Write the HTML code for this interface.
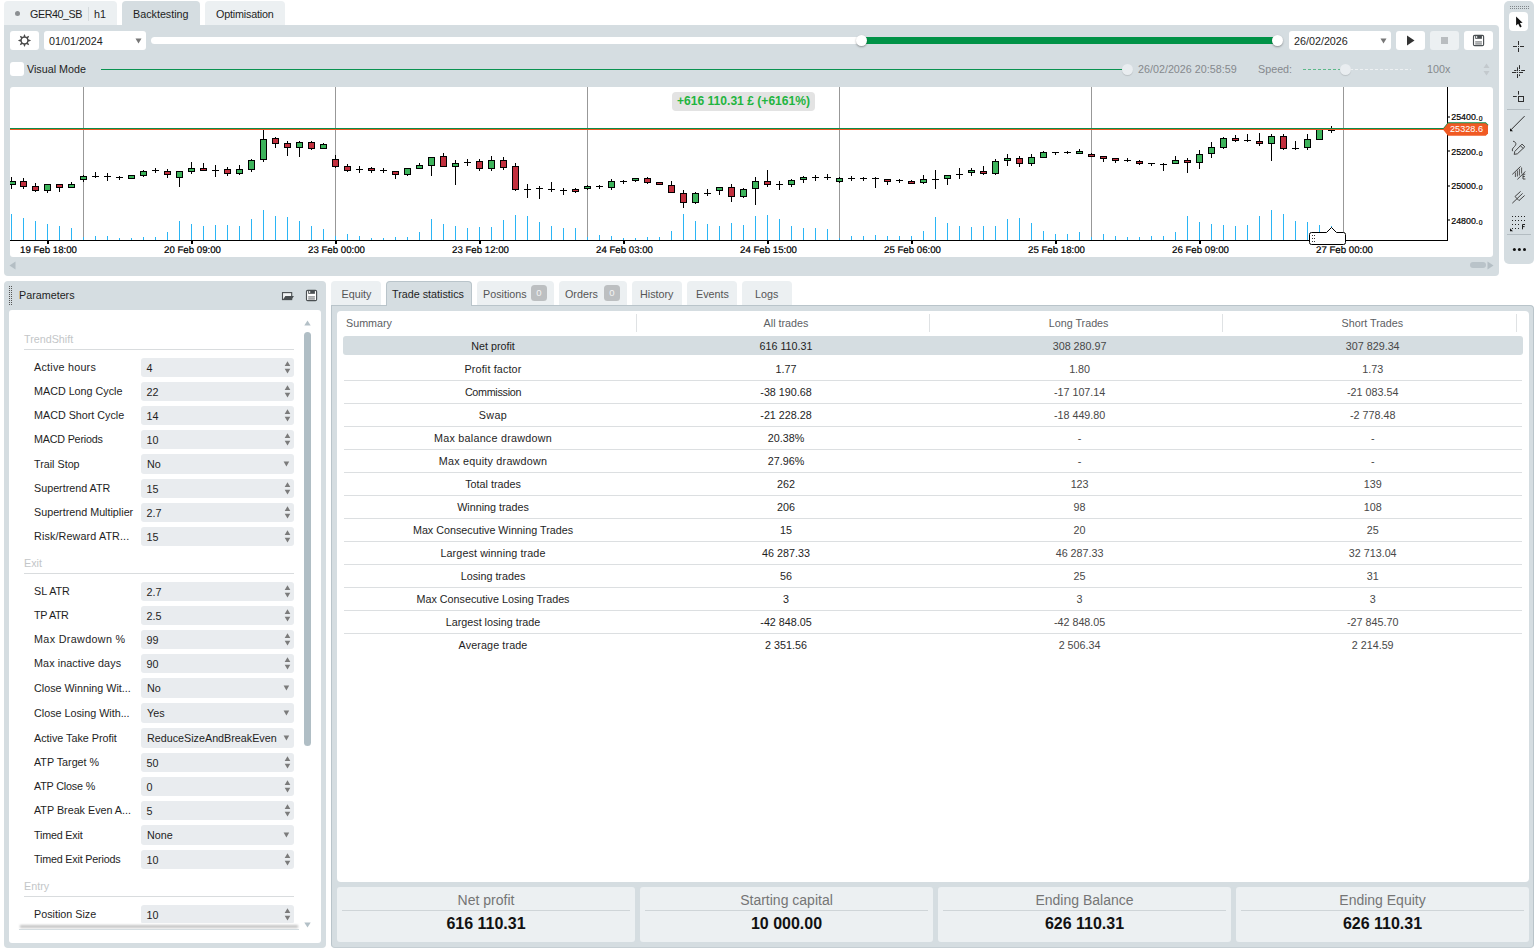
<!DOCTYPE html><html><head><meta charset="utf-8"><title>Backtesting</title><style>
*{box-sizing:border-box;margin:0;padding:0}
html,body{width:1536px;height:949px;overflow:hidden;background:#fff}
body{position:relative;font-family:"Liberation Sans",Arial,sans-serif;font-size:10.75px;color:#1e1e1e}
.a{position:absolute}
.t{position:absolute;white-space:nowrap;line-height:16px;height:16px}
.c{text-align:center}
.g{color:#85898d}
.pan{background:#d5dde1}
.lt{background:#ecf0f2}
.w{background:#fff}
.fld{position:absolute;left:141px;width:153px;height:19px;background:#e9ecef;border-radius:3px}
.sec{position:absolute;left:24px;color:#c3c6c8}
.ln{position:absolute;left:24px;width:270px;height:1px;background:#d9dcde}
.rl{position:absolute;left:344px;width:1178px;height:1px;background:#dcdfe1}
</style></head><body>
<div class="a lt" style="left:4px;top:1px;width:113px;height:24px;border-radius:4px 4px 0 0"></div>
<div class="a " style="left:15px;top:11px;width:5px;height:5px;background:#8b8f92;border-radius:50%"></div>
<span class="t " style="left:30px;top:6px;letter-spacing:-0.45px;">GER40_SB</span>
<div class="a " style="left:88px;top:7px;width:1px;height:14px;background:#d5dadd"></div>
<span class="t " style="left:94px;top:6px;">h1</span>
<div class="a pan" style="left:122px;top:1px;width:78px;height:25px;border-radius:4px 4px 0 0"></div>
<span class="t " style="left:133px;top:6px;">Backtesting</span>
<div class="a lt" style="left:205px;top:1px;width:80px;height:24px;border-radius:4px 4px 0 0"></div>
<span class="t " style="left:216px;top:6px;letter-spacing:-0.18px;">Optimisation</span>
<div class="a pan" style="left:4px;top:25px;width:1495px;height:251px;border-radius:0 4px 4px 4px"></div>
<div class="a w" style="left:10px;top:31px;width:29px;height:19px;border-radius:3px"></div>
<svg class="a" style="left:17px;top:33px" width="15" height="15" viewBox="0 0 15 15"><polygon points="7.50,0.90 8.92,4.08 12.17,2.83 10.92,6.08 14.10,7.50 10.92,8.92 12.17,12.17 8.92,10.92 7.50,14.10 6.08,10.92 2.83,12.17 4.08,8.92 0.90,7.50 4.08,6.08 2.83,2.83 6.08,4.08" fill="#4a4a4a"/><circle cx="7.5" cy="7.5" r="2.7" fill="#fff"/></svg>
<div class="a w" style="left:44px;top:31px;width:102px;height:19px;border-radius:3px"></div>
<span class="t " style="left:49px;top:33px;">01/01/2024</span>
<svg class="a" style="left:135px;top:38px" width="7" height="6"><path d="M0.5 0.5h6L3.5 5.5z" fill="#777"/></svg>
<div class="a w" style="left:151px;top:37px;width:712px;height:7px;border-radius:4px"></div>
<div class="a " style="left:861px;top:37px;width:418px;height:7px;background:#009247;border-radius:0 4px 4px 0"></div>
<div class="a w" style="left:856px;top:35px;width:11px;height:11px;border-radius:50%;box-shadow:0 1px 2px rgba(0,0,0,.35)"></div>
<div class="a w" style="left:1272px;top:35px;width:11px;height:11px;border-radius:50%;box-shadow:0 1px 2px rgba(0,0,0,.35)"></div>
<div class="a w" style="left:1289px;top:31px;width:102px;height:19px;border-radius:3px"></div>
<span class="t " style="left:1294px;top:33px;">26/02/2026</span>
<svg class="a" style="left:1380px;top:38px" width="7" height="6"><path d="M0.5 0.5h6L3.5 5.5z" fill="#777"/></svg>
<div class="a w" style="left:1396px;top:31px;width:29px;height:19px;border-radius:3px"></div>
<svg class="a" style="left:1406px;top:35px" width="9" height="11"><path d="M1 0.5L8.5 5.5L1 10.5z" fill="#333"/></svg>
<div class="a lt" style="left:1430px;top:31px;width:29px;height:19px;border-radius:3px"></div>
<div class="a " style="left:1441px;top:37px;width:7px;height:7px;background:#b9bdc0"></div>
<div class="a w" style="left:1464px;top:31px;width:29px;height:19px;border-radius:3px"></div>
<svg class="a" style="left:1472px;top:34px" width="13" height="13" viewBox="0 0 13 13"><rect x="1.5" y="1.4" width="10.1" height="10.2" rx="1.2" fill="#fff" stroke="#4a4f52" stroke-width="1.15"/><rect x="3.2" y="1.4" width="6.7" height="3.4" fill="#4a4f52"/><rect x="4.1" y="2.1" width="1.1" height="1.8" fill="#fff"/><rect x="3.2" y="7.5" width="6.7" height="0.9" fill="#4a4f52"/><rect x="3.2" y="9.5" width="6.7" height="0.9" fill="#4a4f52"/></svg>
<div class="a w" style="left:10px;top:62px;width:14px;height:14px;border-radius:3px"></div>
<span class="t " style="left:27px;top:61px;">Visual Mode</span>
<div class="a " style="left:101px;top:69px;width:1022px;height:1px;background:#0a9250"></div>
<div class="a " style="left:1122px;top:64px;width:11px;height:11px;background:#e9edf0;border-radius:50%;box-shadow:0 1px 1px rgba(0,0,0,.12)"></div>
<span class="t g" style="left:1138px;top:61px;">26/02/2026 20:58:59</span>
<span class="t g" style="left:1258px;top:61px;">Speed:</span>
<div class="a " style="left:1303px;top:69px;width:42px;height:1px;background:repeating-linear-gradient(90deg,#5db98a 0 3px,transparent 3px 5px)"></div>
<div class="a " style="left:1345px;top:69px;width:66px;height:1px;background:repeating-linear-gradient(90deg,#eef1f3 0 3px,transparent 3px 5px)"></div>
<div class="a " style="left:1340px;top:64px;width:11px;height:11px;background:#e9edf0;border-radius:50%;box-shadow:0 1px 1px rgba(0,0,0,.12)"></div>
<span class="t g" style="left:1427px;top:61px;">100x</span>
<svg class="a" style="left:1483px;top:63px" width="7" height="13"><path d="M3.5 0.5L6.5 5H0.5z M0.5 8H6.5L3.5 12.5z" fill="#c3c9cd"/></svg>
<svg class="a" style="left:9px;top:261px" width="7" height="9"><path d="M6.5 0.5v8L0.5 4.5z" fill="#b4bec4"/></svg>
<div class="a " style="left:1470px;top:262px;width:16px;height:6px;background:#b9c3c9;border-radius:3px"></div>
<svg class="a" style="left:1487px;top:261px" width="7" height="9"><path d="M0.5 0.5v8L6.5 4.5z" fill="#b4bec4"/></svg>
<div class="a w" style="left:10px;top:87px;width:1483px;height:170px;border-radius:3px;overflow:hidden">
<svg class="a" style="left:0;top:0" width="1483" height="170" viewBox="10 87 1483 170" shape-rendering="crispEdges" font-family="Liberation Sans, Arial, sans-serif">
<rect x="83" y="87" width="1" height="153" fill="#989898"/>
<rect x="335" y="87" width="1" height="153" fill="#989898"/>
<rect x="587" y="87" width="1" height="153" fill="#989898"/>
<rect x="839" y="87" width="1" height="153" fill="#989898"/>
<rect x="1091" y="87" width="1" height="153" fill="#989898"/>
<rect x="1343" y="87" width="1" height="153" fill="#989898"/>
<path d="M11.5 214V240M23.5 218V240M35.5 221V240M47.5 224V240M59.5 226V240M71.5 228V240M83.5 237V240M95.5 236V240M107.5 236V240M119.5 238V240M131.5 238V240M143.5 237V240M155.5 237V240M167.5 232V240M179.5 221V240M191.5 224V240M203.5 226V240M215.5 225V240M227.5 225V240M239.5 226V240M251.5 219V240M263.5 210V240M275.5 216V240M287.5 217V240M299.5 221V240M311.5 226V240M323.5 229V240M335.5 236V240M347.5 234V240M359.5 236V240M371.5 238V240M383.5 238V240M395.5 237V240M407.5 237V240M419.5 232V240M431.5 219V240M443.5 224V240M455.5 226V240M467.5 228V240M479.5 227V240M491.5 227V240M503.5 220V240M515.5 215V240M527.5 216V240M539.5 222V240M551.5 226V240M563.5 228V240M575.5 228V240M587.5 237V240M599.5 235V240M611.5 236V240M623.5 238V240M635.5 238V240M647.5 237V240M659.5 237V240M671.5 231V240M683.5 214V240M695.5 221V240M707.5 224V240M719.5 226V240M731.5 223V240M743.5 225V240M755.5 216V240M767.5 215V240M779.5 219V240M791.5 226V240M803.5 228V240M815.5 228V240M827.5 229V240M839.5 238V240M851.5 236V240M863.5 236V240M875.5 235V240M887.5 236V240M899.5 236V240M911.5 236V240M923.5 231V240M935.5 217V240M947.5 223V240M959.5 226V240M971.5 227V240M983.5 226V240M995.5 226V240M1007.5 219V240M1019.5 218V240M1031.5 223V240M1043.5 231V240M1055.5 234V240M1067.5 234V240M1079.5 232V240M1091.5 237V240M1103.5 234V240M1115.5 236V240M1127.5 237V240M1139.5 237V240M1151.5 236V240M1163.5 236V240M1175.5 232V240M1187.5 216V240M1199.5 222V240M1211.5 224V240M1223.5 225V240M1235.5 226V240M1247.5 225V240M1259.5 216V240M1271.5 210V240M1283.5 214V240M1295.5 221V240M1307.5 222V240M1319.5 225V240M1331.5 226V240" stroke="#2bb5f5" stroke-width="1" fill="none"/>
<path d="M11.5 177V189M23.5 178V189M35.5 183V192M47.5 184V193M59.5 184V192M71.5 182V188M83.5 175V182M95.5 172V178M107.5 173V181M119.5 176V180M131.5 175V179M143.5 170V177M155.5 168V173M167.5 169V178M179.5 171V187M191.5 162V174M203.5 163V171M215.5 165V177M227.5 167V176M239.5 165V175M251.5 159V172M263.5 129V162M275.5 137V148M287.5 141V156M299.5 141V157M311.5 141V150M323.5 143V149M335.5 155V168M347.5 164V172M359.5 166V173M371.5 167V173M383.5 168V173M395.5 171V179M407.5 168V176M419.5 163V169M431.5 157V176M443.5 153V167M455.5 160V185M467.5 159V166M479.5 159V171M491.5 156V171M503.5 157V170M515.5 163V191M527.5 184V198M539.5 186V199M551.5 182V192M563.5 188V195M575.5 188V193M587.5 185V190M599.5 185V189M611.5 179V190M623.5 180V184M635.5 178V182M647.5 177V184M659.5 182V185M671.5 181V193M683.5 190V208M695.5 192V204M707.5 189V196M719.5 187V195M731.5 184V202M743.5 188V198M755.5 177V205M767.5 170V187M779.5 181V190M791.5 179V187M803.5 176V183M815.5 175V181M827.5 174V180M839.5 177V183M851.5 176V181M863.5 177V181M875.5 177V188M887.5 179V185M899.5 179V183M911.5 180V184M923.5 175V184M935.5 170V189M947.5 175V185M959.5 168V179M971.5 168V176M983.5 166V175M995.5 159V175M1007.5 154V166M1019.5 156V167M1031.5 154V166M1043.5 151V158M1055.5 153V155M1067.5 151V154M1079.5 149V154M1091.5 153V157M1103.5 156V162M1115.5 158V163M1127.5 158V162M1139.5 160V165M1151.5 163V166M1163.5 163V171M1175.5 156V164M1187.5 158V173M1199.5 150V169M1211.5 142V158M1223.5 137V149M1235.5 135V142M1247.5 134V142M1259.5 133V146M1271.5 134V161M1283.5 134V150M1295.5 141V150M1307.5 134V150M1319.5 129V140M1331.5 126V133" stroke="#000" stroke-width="1" fill="none"/>
<path d="M92 176.5H99M104 176.5H111M116 177.5H123M152 170.5H159M212 170.5H219M356 169.5H363M380 170.5H387M464 162.5H471M524 189.5H531M536 188.5H543M548 189.5H555M560 190.5H567M596 186.5H603M620 181.5H627M704 193.5H711M776 184.5H783M812 177.5H819M824 177.5H831M848 178.5H855M860 178.5H867M872 178.5H879M896 180.5H903M932 179.5H939M956 174.5H963M1052 152.5H1059M1064 152.5H1071M1124 160.5H1131M1148 163.5H1155M1160 164.5H1167M1244 140.5H1251M1292 148.5H1299M1328 130.5H1335" stroke="#000" stroke-width="1" fill="none"/>
<g fill="#3db35b" stroke="#000" stroke-width="1"><rect x="8.5" y="181.5" width="7" height="3"/><rect x="44.5" y="184.5" width="6" height="6"/><rect x="68.5" y="184.5" width="6" height="3"/><rect x="80.5" y="176.5" width="6" height="3"/><rect x="128.5" y="175.5" width="6" height="3"/><rect x="140.5" y="171.5" width="6" height="4"/><rect x="176.5" y="171.5" width="6" height="6"/><rect x="188.5" y="168.5" width="6" height="3"/><rect x="236.5" y="169.5" width="6" height="4"/><rect x="248.5" y="160.5" width="6" height="9"/><rect x="260.5" y="139.5" width="6" height="20"/><rect x="296.5" y="142.5" width="6" height="5"/><rect x="320.5" y="144.5" width="6" height="4"/><rect x="404.5" y="168.5" width="6" height="6"/><rect x="416.5" y="165.5" width="6" height="3"/><rect x="428.5" y="157.5" width="6" height="8"/><rect x="452.5" y="163.5" width="6" height="3"/><rect x="488.5" y="160.5" width="6" height="8"/><rect x="584.5" y="186.5" width="6" height="2"/><rect x="608.5" y="181.5" width="6" height="6"/><rect x="632.5" y="178.5" width="6" height="2"/><rect x="692.5" y="193.5" width="6" height="9"/><rect x="716.5" y="187.5" width="6" height="3"/><rect x="740.5" y="189.5" width="6" height="7"/><rect x="752.5" y="181.5" width="6" height="7"/><rect x="788.5" y="180.5" width="6" height="4"/><rect x="800.5" y="177.5" width="6" height="2"/><rect x="836.5" y="178.5" width="6" height="3"/><rect x="920.5" y="179.5" width="6" height="3"/><rect x="944.5" y="175.5" width="6" height="3"/><rect x="968.5" y="170.5" width="6" height="2"/><rect x="992.5" y="161.5" width="6" height="12"/><rect x="1004.5" y="158.5" width="6" height="2"/><rect x="1028.5" y="157.5" width="6" height="6"/><rect x="1040.5" y="152.5" width="6" height="5"/><rect x="1076.5" y="151.5" width="6" height="2"/><rect x="1172.5" y="160.5" width="6" height="3"/><rect x="1196.5" y="154.5" width="6" height="8"/><rect x="1208.5" y="147.5" width="6" height="6"/><rect x="1220.5" y="138.5" width="6" height="9"/><rect x="1268.5" y="136.5" width="6" height="7"/><rect x="1304.5" y="139.5" width="6" height="8"/><rect x="1316.5" y="129.5" width="6" height="10"/></g>
<g fill="#c2303e" stroke="#000" stroke-width="1"><rect x="20.5" y="181.5" width="6" height="5"/><rect x="32.5" y="186.5" width="6" height="4"/><rect x="56.5" y="184.5" width="6" height="3"/><rect x="164.5" y="171.5" width="6" height="3"/><rect x="200.5" y="168.5" width="6" height="2"/><rect x="224.5" y="169.5" width="6" height="4"/><rect x="272.5" y="138.5" width="6" height="5"/><rect x="284.5" y="143.5" width="6" height="4"/><rect x="308.5" y="142.5" width="6" height="6"/><rect x="332.5" y="159.5" width="6" height="7"/><rect x="344.5" y="166.5" width="6" height="4"/><rect x="368.5" y="168.5" width="6" height="2"/><rect x="392.5" y="171.5" width="6" height="3"/><rect x="440.5" y="156.5" width="6" height="10"/><rect x="476.5" y="161.5" width="6" height="7"/><rect x="500.5" y="160.5" width="6" height="7"/><rect x="512.5" y="166.5" width="6" height="23"/><rect x="572.5" y="189.5" width="6" height="2"/><rect x="644.5" y="178.5" width="6" height="4"/><rect x="656.5" y="182.5" width="6" height="2"/><rect x="668.5" y="185.5" width="6" height="7"/><rect x="680.5" y="193.5" width="6" height="9"/><rect x="728.5" y="187.5" width="6" height="9"/><rect x="764.5" y="181.5" width="6" height="3"/><rect x="884.5" y="179.5" width="6" height="2"/><rect x="908.5" y="181.5" width="6" height="2"/><rect x="980.5" y="171.5" width="6" height="2"/><rect x="1016.5" y="158.5" width="6" height="5"/><rect x="1088.5" y="154.5" width="6" height="2"/><rect x="1100.5" y="156.5" width="6" height="2"/><rect x="1112.5" y="158.5" width="6" height="2"/><rect x="1136.5" y="161.5" width="6" height="2"/><rect x="1184.5" y="160.5" width="6" height="2"/><rect x="1232.5" y="138.5" width="6" height="2"/><rect x="1256.5" y="141.5" width="6" height="2"/><rect x="1280.5" y="136.5" width="6" height="12"/></g>
<rect x="10" y="128" width="1434" height="1" fill="#0d8c4b"/>
<rect x="10" y="129" width="1434" height="1" fill="#e9561d"/>
<rect x="10" y="240" width="1438" height="1" fill="#000"/>
<rect x="1447" y="87" width="1" height="154" fill="#000"/>
<rect x="47" y="240" width="2" height="4" fill="#000"/>
<text x="48.5" y="252.8" font-size="9.6" text-anchor="middle" textLength="57" lengthAdjust="spacingAndGlyphs" fill="#000" stroke="#000" stroke-width="0.2" shape-rendering="auto" text-rendering="geometricPrecision">19 Feb 18:00</text>
<rect x="191" y="240" width="2" height="4" fill="#000"/>
<text x="192.5" y="252.8" font-size="9.6" text-anchor="middle" textLength="57" lengthAdjust="spacingAndGlyphs" fill="#000" stroke="#000" stroke-width="0.2" shape-rendering="auto" text-rendering="geometricPrecision">20 Feb 09:00</text>
<rect x="335" y="240" width="2" height="4" fill="#000"/>
<text x="336.5" y="252.8" font-size="9.6" text-anchor="middle" textLength="57" lengthAdjust="spacingAndGlyphs" fill="#000" stroke="#000" stroke-width="0.2" shape-rendering="auto" text-rendering="geometricPrecision">23 Feb 00:00</text>
<rect x="479" y="240" width="2" height="4" fill="#000"/>
<text x="480.5" y="252.8" font-size="9.6" text-anchor="middle" textLength="57" lengthAdjust="spacingAndGlyphs" fill="#000" stroke="#000" stroke-width="0.2" shape-rendering="auto" text-rendering="geometricPrecision">23 Feb 12:00</text>
<rect x="623" y="240" width="2" height="4" fill="#000"/>
<text x="624.5" y="252.8" font-size="9.6" text-anchor="middle" textLength="57" lengthAdjust="spacingAndGlyphs" fill="#000" stroke="#000" stroke-width="0.2" shape-rendering="auto" text-rendering="geometricPrecision">24 Feb 03:00</text>
<rect x="767" y="240" width="2" height="4" fill="#000"/>
<text x="768.5" y="252.8" font-size="9.6" text-anchor="middle" textLength="57" lengthAdjust="spacingAndGlyphs" fill="#000" stroke="#000" stroke-width="0.2" shape-rendering="auto" text-rendering="geometricPrecision">24 Feb 15:00</text>
<rect x="911" y="240" width="2" height="4" fill="#000"/>
<text x="912.5" y="252.8" font-size="9.6" text-anchor="middle" textLength="57" lengthAdjust="spacingAndGlyphs" fill="#000" stroke="#000" stroke-width="0.2" shape-rendering="auto" text-rendering="geometricPrecision">25 Feb 06:00</text>
<rect x="1055" y="240" width="2" height="4" fill="#000"/>
<text x="1056.5" y="252.8" font-size="9.6" text-anchor="middle" textLength="57" lengthAdjust="spacingAndGlyphs" fill="#000" stroke="#000" stroke-width="0.2" shape-rendering="auto" text-rendering="geometricPrecision">25 Feb 18:00</text>
<rect x="1199" y="240" width="2" height="4" fill="#000"/>
<text x="1200.5" y="252.8" font-size="9.6" text-anchor="middle" textLength="57" lengthAdjust="spacingAndGlyphs" fill="#000" stroke="#000" stroke-width="0.2" shape-rendering="auto" text-rendering="geometricPrecision">26 Feb 09:00</text>
<rect x="1343" y="240" width="2" height="4" fill="#000"/>
<text x="1344.5" y="252.8" font-size="9.6" text-anchor="middle" textLength="57" lengthAdjust="spacingAndGlyphs" fill="#000" stroke="#000" stroke-width="0.2" shape-rendering="auto" text-rendering="geometricPrecision">27 Feb 00:00</text>
<rect x="1448" y="116" width="2" height="2" fill="#777"/>
<text x="1451.3" y="119.9" font-size="9.6" fill="#000" stroke="#000" stroke-width="0.2" shape-rendering="auto"><tspan textLength="27" lengthAdjust="spacingAndGlyphs">25400.</tspan><tspan font-size="6.8" dy="1" dx="0.5">0</tspan></text>
<rect x="1448" y="150" width="2" height="2" fill="#777"/>
<text x="1451.3" y="154.6" font-size="9.6" fill="#000" stroke="#000" stroke-width="0.2" shape-rendering="auto"><tspan textLength="27" lengthAdjust="spacingAndGlyphs">25200.</tspan><tspan font-size="6.8" dy="1" dx="0.5">0</tspan></text>
<rect x="1448" y="185" width="2" height="2" fill="#777"/>
<text x="1451.3" y="188.9" font-size="9.6" fill="#000" stroke="#000" stroke-width="0.2" shape-rendering="auto"><tspan textLength="27" lengthAdjust="spacingAndGlyphs">25000.</tspan><tspan font-size="6.8" dy="1" dx="0.5">0</tspan></text>
<rect x="1448" y="219" width="2" height="2" fill="#777"/>
<text x="1451.3" y="223.6" font-size="9.6" fill="#000" stroke="#000" stroke-width="0.2" shape-rendering="auto"><tspan textLength="27" lengthAdjust="spacingAndGlyphs">24800.</tspan><tspan font-size="6.8" dy="1" dx="0.5">0</tspan></text>
<path d="M1443 128.5L1448 122.3H1485.8L1488 124.5V132.5L1485.8 134.7H1448Z" fill="#0d8c4b" shape-rendering="auto"/>
<path d="M1443 129.5L1448 123.2H1485.8L1488 125.4V133.6L1485.8 135.8H1448Z" fill="#f05a23" shape-rendering="auto"/>
<text x="1450" y="131.8" font-size="9.15" fill="#fff" shape-rendering="auto">25328.6</text>
<path d="M1311.5 232.5H1326.5L1331.5 227.5L1336.5 232.5H1343.5Q1345.5 232.5 1345.5 234.5V242.5Q1345.5 244.5 1343.5 244.5H1311.5Q1309.5 244.5 1309.5 242.5V234.5Q1309.5 232.5 1311.5 232.5Z" fill="#fff" stroke="#000" stroke-width="1" shape-rendering="auto"/>
<rect x="1312" y="235" width="1" height="1" fill="#333"/><rect x="1314" y="235" width="1" height="1" fill="#333"/>
<rect x="1312" y="238" width="1" height="1" fill="#333"/><rect x="1314" y="238" width="1" height="1" fill="#333"/>
<rect x="1312" y="241" width="1" height="1" fill="#333"/><rect x="1314" y="241" width="1" height="1" fill="#333"/>
</svg>
<div class="a" style="left:662px;top:5px;width:143px;height:19px;background:#e3e3e3;border-radius:4px"></div>
<span class="t c" style="left:662px;width:143px;top:6px;font-weight:bold;font-size:12.1px;color:#1fb540">+616 110.31 £ (+6161%)</span>
</div>
<div class="a pan" style="left:4px;top:281px;width:322px;height:667px;border-radius:4px"></div>
<div class="a" style="left:9px;top:286px;width:3px;height:19px;background-image:radial-gradient(circle at 0.5px 0.5px,#555 0.55px,transparent 0.7px);background-size:2px 2px"></div>
<span class="t " style="left:19px;top:287px;color:#4d565dletter-spacing:-0.15px;">Parameters</span>
<svg class="a" style="left:281px;top:291px" width="14" height="10" viewBox="281 291 14 10"><rect x="282.5" y="292.6" width="9.2" height="7" fill="#f2f4f5" stroke="#4a4f52" stroke-width="1.1"/><path d="M285.4 296H294L291.1 300.1H282.6Z" fill="#4a4f52"/></svg>
<svg class="a" style="left:305px;top:289px" width="13" height="13" viewBox="0 0 13 13"><rect x="1.5" y="1.4" width="10.1" height="10.2" rx="1.2" fill="#fff" stroke="#4a4f52" stroke-width="1.15"/><rect x="3.2" y="1.4" width="6.7" height="3.4" fill="#4a4f52"/><rect x="4.1" y="2.1" width="1.1" height="1.8" fill="#fff"/><rect x="3.2" y="7.5" width="6.7" height="0.9" fill="#4a4f52"/><rect x="3.2" y="9.5" width="6.7" height="0.9" fill="#4a4f52"/></svg>
<div class="a w" style="left:9px;top:310px;width:312px;height:633px;border-radius:3px"></div>
<svg class="a" style="left:304px;top:320px" width="7" height="6"><path d="M3.5 0.5L6.7 5.5H0.3z" fill="#b3c0c7"/></svg>
<div class="a " style="left:304px;top:332px;width:7px;height:414px;background:#b0bec5;border-radius:3.5px"></div>
<svg class="a" style="left:304px;top:922px" width="7" height="6"><path d="M0.3 0.5H6.7L3.5 5.5z" fill="#b3c0c7"/></svg>
<span class="t sec" style="top:331px">TrendShift</span>
<div class="ln" style="top:349px"></div>
<span class="t " style="left:34px;top:358.5px;letter-spacing:0.24px;">Active hours</span>
<div class="fld" style="top:358px"><span class="t" style="left:5.5px;top:1.5px">4</span><svg class="a" style="left:143px;top:3px" width="7" height="13"><path d="M3.5 0.3L6.3 5.1H0.7z M0.7 7.7H6.3L3.5 12.5z" fill="#7b7b7b"/></svg></div>
<span class="t " style="left:34px;top:382.5px;">MACD Long Cycle</span>
<div class="fld" style="top:382px"><span class="t" style="left:5.5px;top:1.5px">22</span><svg class="a" style="left:143px;top:3px" width="7" height="13"><path d="M3.5 0.3L6.3 5.1H0.7z M0.7 7.7H6.3L3.5 12.5z" fill="#7b7b7b"/></svg></div>
<span class="t " style="left:34px;top:406.5px;">MACD Short Cycle</span>
<div class="fld" style="top:406px"><span class="t" style="left:5.5px;top:1.5px">14</span><svg class="a" style="left:143px;top:3px" width="7" height="13"><path d="M3.5 0.3L6.3 5.1H0.7z M0.7 7.7H6.3L3.5 12.5z" fill="#7b7b7b"/></svg></div>
<span class="t " style="left:34px;top:430.5px;letter-spacing:-0.2px;">MACD Periods</span>
<div class="fld" style="top:430px"><span class="t" style="left:5.5px;top:1.5px">10</span><svg class="a" style="left:143px;top:3px" width="7" height="13"><path d="M3.5 0.3L6.3 5.1H0.7z M0.7 7.7H6.3L3.5 12.5z" fill="#7b7b7b"/></svg></div>
<span class="t " style="left:34px;top:455.5px;">Trail Stop</span>
<div class="fld" style="top:454px;height:20px"><span class="t" style="left:6px;top:1.5px">No</span><svg class="a" style="left:142.4px;top:7px" width="7" height="6"><path d="M0.6 0.5H6.2L3.4 5.6z" fill="#7b7b7b"/></svg></div>
<span class="t " style="left:34px;top:479.5px;">Supertrend ATR</span>
<div class="fld" style="top:479px"><span class="t" style="left:5.5px;top:1.5px">15</span><svg class="a" style="left:143px;top:3px" width="7" height="13"><path d="M3.5 0.3L6.3 5.1H0.7z M0.7 7.7H6.3L3.5 12.5z" fill="#7b7b7b"/></svg></div>
<span class="t " style="left:34px;top:503.5px;">Supertrend Multiplier</span>
<div class="fld" style="top:503px"><span class="t" style="left:5.5px;top:1.5px">2.7</span><svg class="a" style="left:143px;top:3px" width="7" height="13"><path d="M3.5 0.3L6.3 5.1H0.7z M0.7 7.7H6.3L3.5 12.5z" fill="#7b7b7b"/></svg></div>
<span class="t " style="left:34px;top:527.5px;letter-spacing:0.13px;">Risk/Reward ATR...</span>
<div class="fld" style="top:527px"><span class="t" style="left:5.5px;top:1.5px">15</span><svg class="a" style="left:143px;top:3px" width="7" height="13"><path d="M3.5 0.3L6.3 5.1H0.7z M0.7 7.7H6.3L3.5 12.5z" fill="#7b7b7b"/></svg></div>
<span class="t sec" style="top:555px">Exit</span>
<div class="ln" style="top:573px"></div>
<span class="t " style="left:34px;top:582.5px;">SL ATR</span>
<div class="fld" style="top:582px"><span class="t" style="left:5.5px;top:1.5px">2.7</span><svg class="a" style="left:143px;top:3px" width="7" height="13"><path d="M3.5 0.3L6.3 5.1H0.7z M0.7 7.7H6.3L3.5 12.5z" fill="#7b7b7b"/></svg></div>
<span class="t " style="left:34px;top:606.5px;letter-spacing:-0.35px;">TP ATR</span>
<div class="fld" style="top:606px"><span class="t" style="left:5.5px;top:1.5px">2.5</span><svg class="a" style="left:143px;top:3px" width="7" height="13"><path d="M3.5 0.3L6.3 5.1H0.7z M0.7 7.7H6.3L3.5 12.5z" fill="#7b7b7b"/></svg></div>
<span class="t " style="left:34px;top:630.5px;letter-spacing:0.35px;">Max Drawdown %</span>
<div class="fld" style="top:630px"><span class="t" style="left:5.5px;top:1.5px">99</span><svg class="a" style="left:143px;top:3px" width="7" height="13"><path d="M3.5 0.3L6.3 5.1H0.7z M0.7 7.7H6.3L3.5 12.5z" fill="#7b7b7b"/></svg></div>
<span class="t " style="left:34px;top:654.5px;letter-spacing:0.1px;">Max inactive days</span>
<div class="fld" style="top:654px"><span class="t" style="left:5.5px;top:1.5px">90</span><svg class="a" style="left:143px;top:3px" width="7" height="13"><path d="M3.5 0.3L6.3 5.1H0.7z M0.7 7.7H6.3L3.5 12.5z" fill="#7b7b7b"/></svg></div>
<span class="t " style="left:34px;top:679.5px;">Close Winning Wit...</span>
<div class="fld" style="top:678px;height:20px"><span class="t" style="left:6px;top:1.5px">No</span><svg class="a" style="left:142.4px;top:7px" width="7" height="6"><path d="M0.6 0.5H6.2L3.4 5.6z" fill="#7b7b7b"/></svg></div>
<span class="t " style="left:34px;top:704.5px;">Close Losing With...</span>
<div class="fld" style="top:703px;height:20px"><span class="t" style="left:6px;top:1.5px">Yes</span><svg class="a" style="left:142.4px;top:7px" width="7" height="6"><path d="M0.6 0.5H6.2L3.4 5.6z" fill="#7b7b7b"/></svg></div>
<span class="t " style="left:34px;top:729.5px;">Active Take Profit</span>
<div class="fld" style="top:728px;height:20px"><span class="t" style="left:6px;top:1.5px">ReduceSizeAndBreakEven</span><svg class="a" style="left:142.4px;top:7px" width="7" height="6"><path d="M0.6 0.5H6.2L3.4 5.6z" fill="#7b7b7b"/></svg></div>
<span class="t " style="left:34px;top:753.5px;">ATP Target %</span>
<div class="fld" style="top:753px"><span class="t" style="left:5.5px;top:1.5px">50</span><svg class="a" style="left:143px;top:3px" width="7" height="13"><path d="M3.5 0.3L6.3 5.1H0.7z M0.7 7.7H6.3L3.5 12.5z" fill="#7b7b7b"/></svg></div>
<span class="t " style="left:34px;top:777.5px;letter-spacing:-0.17px;">ATP Close %</span>
<div class="fld" style="top:777px"><span class="t" style="left:5.5px;top:1.5px">0</span><svg class="a" style="left:143px;top:3px" width="7" height="13"><path d="M3.5 0.3L6.3 5.1H0.7z M0.7 7.7H6.3L3.5 12.5z" fill="#7b7b7b"/></svg></div>
<span class="t " style="left:34px;top:801.5px;">ATP Break Even A...</span>
<div class="fld" style="top:801px"><span class="t" style="left:5.5px;top:1.5px">5</span><svg class="a" style="left:143px;top:3px" width="7" height="13"><path d="M3.5 0.3L6.3 5.1H0.7z M0.7 7.7H6.3L3.5 12.5z" fill="#7b7b7b"/></svg></div>
<span class="t " style="left:34px;top:826.5px;letter-spacing:-0.19px;">Timed Exit</span>
<div class="fld" style="top:825px;height:20px"><span class="t" style="left:6px;top:1.5px">None</span><svg class="a" style="left:142.4px;top:7px" width="7" height="6"><path d="M0.6 0.5H6.2L3.4 5.6z" fill="#7b7b7b"/></svg></div>
<span class="t " style="left:34px;top:850.5px;letter-spacing:-0.19px;">Timed Exit Periods</span>
<div class="fld" style="top:850px"><span class="t" style="left:5.5px;top:1.5px">10</span><svg class="a" style="left:143px;top:3px" width="7" height="13"><path d="M3.5 0.3L6.3 5.1H0.7z M0.7 7.7H6.3L3.5 12.5z" fill="#7b7b7b"/></svg></div>
<span class="t sec" style="top:878px">Entry</span>
<div class="ln" style="top:896px"></div>
<span class="t " style="left:34px;top:905.5px;">Position Size</span>
<div class="fld" style="top:905px"><span class="t" style="left:5.5px;top:1.5px">10</span><svg class="a" style="left:143px;top:3px" width="7" height="13"><path d="M3.5 0.3L6.3 5.1H0.7z M0.7 7.7H6.3L3.5 12.5z" fill="#7b7b7b"/></svg></div>
<div class="a w" style="left:19px;top:923px;width:281px;height:9px;"></div>
<div class="a " style="left:20px;top:924.8px;width:278px;height:3.6px;background:#c4c4c4;filter:blur(1.25px)"></div>
<div class="a " style="left:19px;top:929px;width:280px;height:1px;background:#d5dde1"></div>
<div class="a pan" style="left:331px;top:305px;width:1203px;height:643px;border-radius:0 4px 4px 4px;border:1px solid #b9c4ca;border-bottom-color:#c5ced3"></div>
<div class="a lt" style="left:331px;top:281px;width:50px;height:24px;border-radius:4px 4px 0 0"></div>
<div class="a pan" style="left:386px;top:281px;width:86px;height:25px;border-radius:4px 4px 0 0;border:1px solid #b9c4ca;border-bottom:none"></div>
<div class="a lt" style="left:477px;top:281px;width:77px;height:24px;border-radius:4px 4px 0 0"></div>
<div class="a lt" style="left:559px;top:281px;width:68px;height:24px;border-radius:4px 4px 0 0"></div>
<div class="a lt" style="left:632px;top:281px;width:50px;height:24px;border-radius:4px 4px 0 0"></div>
<div class="a lt" style="left:687px;top:281px;width:50px;height:24px;border-radius:4px 4px 0 0"></div>
<div class="a lt" style="left:742px;top:281px;width:50px;height:24px;border-radius:4px 4px 0 0"></div>
<span class="t " style="left:341.5px;top:286px;color:#555">Equity</span>
<span class="t " style="left:392px;top:286px;color:#1a1a1aletter-spacing:0.15px;">Trade statistics</span>
<span class="t " style="left:483px;top:286px;color:#555">Positions</span>
<div class="a " style="left:531px;top:284.5px;width:16px;height:16px;background:#bcbfc1;border-radius:3.5px"></div>
<span class="t c " style="left:531.0px;width:16px;top:284.5px;color:#f4f4f4;font-size:9.5px">0</span>
<span class="t " style="left:565px;top:286px;color:#555">Orders</span>
<div class="a " style="left:604px;top:284.5px;width:16px;height:16px;background:#bcbfc1;border-radius:3.5px"></div>
<span class="t c " style="left:604.0px;width:16px;top:284.5px;color:#f4f4f4;font-size:9.5px">0</span>
<span class="t " style="left:640px;top:286px;color:#555">History</span>
<span class="t " style="left:696px;top:286px;color:#555">Events</span>
<span class="t " style="left:755px;top:286px;color:#555">Logs</span>
<div class="a w" style="left:337px;top:311px;width:1192px;height:571px;border-radius:4px"></div>
<span class="t " style="left:346px;top:315px;color:#5c6063">Summary</span>
<span class="t c " style="left:636.0px;width:300px;top:315px;color:#5c6063">All trades</span>
<span class="t c " style="left:928.5999999999999px;width:300px;top:315px;color:#5c6063">Long Trades</span>
<span class="t c " style="left:1222.3px;width:300px;top:315px;color:#5c6063">Short Trades</span>
<div class="a " style="left:636px;top:314px;width:1px;height:18px;background:#dfe2e4"></div>
<div class="a " style="left:929px;top:314px;width:1px;height:18px;background:#dfe2e4"></div>
<div class="a " style="left:1222px;top:314px;width:1px;height:18px;background:#dfe2e4"></div>
<div class="a " style="left:1516px;top:314px;width:1px;height:18px;background:#dfe2e4"></div>
<div class="a pan" style="left:343px;top:336px;width:1180px;height:19px;border-radius:3px"></div>
<span class="t c " style="left:343.0px;width:300px;top:338px;">Net profit</span>
<span class="t c " style="left:636.0px;width:300px;top:338px;">616 110.31</span>
<span class="t c " style="left:929.5999999999999px;width:300px;top:338px;color:#484848">308 280.97</span>
<span class="t c " style="left:1222.7px;width:300px;top:338px;color:#484848">307 829.34</span>
<span class="t c " style="left:343.0px;width:300px;top:361px;letter-spacing:0.15px;">Profit factor</span>
<span class="t c " style="left:636.0px;width:300px;top:361px;">1.77</span>
<span class="t c " style="left:929.5999999999999px;width:300px;top:361px;color:#484848">1.80</span>
<span class="t c " style="left:1222.7px;width:300px;top:361px;color:#484848">1.73</span>
<div class="rl" style="top:380px"></div>
<span class="t c " style="left:343.0px;width:300px;top:384px;letter-spacing:-0.29px;">Commission</span>
<span class="t c " style="left:636.0px;width:300px;top:384px;">-38 190.68</span>
<span class="t c " style="left:929.5999999999999px;width:300px;top:384px;color:#484848">-17 107.14</span>
<span class="t c " style="left:1222.7px;width:300px;top:384px;color:#484848">-21 083.54</span>
<div class="rl" style="top:403px"></div>
<span class="t c " style="left:343.0px;width:300px;top:407px;letter-spacing:0.4px;">Swap</span>
<span class="t c " style="left:636.0px;width:300px;top:407px;">-21 228.28</span>
<span class="t c " style="left:929.5999999999999px;width:300px;top:407px;color:#484848">-18 449.80</span>
<span class="t c " style="left:1222.7px;width:300px;top:407px;color:#484848">-2 778.48</span>
<div class="rl" style="top:426px"></div>
<span class="t c " style="left:343.0px;width:300px;top:430px;letter-spacing:0.25px;">Max balance drawdown</span>
<span class="t c " style="left:636.0px;width:300px;top:430px;">20.38%</span>
<span class="t c " style="left:929.5999999999999px;width:300px;top:430px;color:#484848">-</span>
<span class="t c " style="left:1222.7px;width:300px;top:430px;color:#484848">-</span>
<div class="rl" style="top:449px"></div>
<span class="t c " style="left:343.0px;width:300px;top:453px;letter-spacing:0.24px;">Max equity drawdown</span>
<span class="t c " style="left:636.0px;width:300px;top:453px;">27.96%</span>
<span class="t c " style="left:929.5999999999999px;width:300px;top:453px;color:#484848">-</span>
<span class="t c " style="left:1222.7px;width:300px;top:453px;color:#484848">-</span>
<div class="rl" style="top:472px"></div>
<span class="t c " style="left:343.0px;width:300px;top:476px;">Total trades</span>
<span class="t c " style="left:636.0px;width:300px;top:476px;">262</span>
<span class="t c " style="left:929.5999999999999px;width:300px;top:476px;color:#484848">123</span>
<span class="t c " style="left:1222.7px;width:300px;top:476px;color:#484848">139</span>
<div class="rl" style="top:495px"></div>
<span class="t c " style="left:343.0px;width:300px;top:499px;">Winning trades</span>
<span class="t c " style="left:636.0px;width:300px;top:499px;">206</span>
<span class="t c " style="left:929.5999999999999px;width:300px;top:499px;color:#484848">98</span>
<span class="t c " style="left:1222.7px;width:300px;top:499px;color:#484848">108</span>
<div class="rl" style="top:518px"></div>
<span class="t c " style="left:343.0px;width:300px;top:522px;">Max Consecutive Winning Trades</span>
<span class="t c " style="left:636.0px;width:300px;top:522px;">15</span>
<span class="t c " style="left:929.5999999999999px;width:300px;top:522px;color:#484848">20</span>
<span class="t c " style="left:1222.7px;width:300px;top:522px;color:#484848">25</span>
<div class="rl" style="top:541px"></div>
<span class="t c " style="left:343.0px;width:300px;top:545px;letter-spacing:0.11px;">Largest winning trade</span>
<span class="t c " style="left:636.0px;width:300px;top:545px;">46 287.33</span>
<span class="t c " style="left:929.5999999999999px;width:300px;top:545px;color:#484848">46 287.33</span>
<span class="t c " style="left:1222.7px;width:300px;top:545px;color:#484848">32 713.04</span>
<div class="rl" style="top:564px"></div>
<span class="t c " style="left:343.0px;width:300px;top:568px;">Losing trades</span>
<span class="t c " style="left:636.0px;width:300px;top:568px;">56</span>
<span class="t c " style="left:929.5999999999999px;width:300px;top:568px;color:#484848">25</span>
<span class="t c " style="left:1222.7px;width:300px;top:568px;color:#484848">31</span>
<div class="rl" style="top:587px"></div>
<span class="t c " style="left:343.0px;width:300px;top:591px;">Max Consecutive Losing Trades</span>
<span class="t c " style="left:636.0px;width:300px;top:591px;">3</span>
<span class="t c " style="left:929.5999999999999px;width:300px;top:591px;color:#484848">3</span>
<span class="t c " style="left:1222.7px;width:300px;top:591px;color:#484848">3</span>
<div class="rl" style="top:610px"></div>
<span class="t c " style="left:343.0px;width:300px;top:614px;">Largest losing trade</span>
<span class="t c " style="left:636.0px;width:300px;top:614px;">-42 848.05</span>
<span class="t c " style="left:929.5999999999999px;width:300px;top:614px;color:#484848">-42 848.05</span>
<span class="t c " style="left:1222.7px;width:300px;top:614px;color:#484848">-27 845.70</span>
<div class="rl" style="top:633px"></div>
<span class="t c " style="left:343.0px;width:300px;top:637px;letter-spacing:0.12px;">Average trade</span>
<span class="t c " style="left:636.0px;width:300px;top:637px;">2 351.56</span>
<span class="t c " style="left:929.5999999999999px;width:300px;top:637px;color:#484848">2 506.34</span>
<span class="t c " style="left:1222.7px;width:300px;top:637px;color:#484848">2 214.59</span>
<div class="a lt" style="left:337px;top:887px;width:298px;height:55px;border-radius:3px"></div>
<div class="a " style="left:342px;top:910px;width:288px;height:1px;background:#cfd5d8"></div>
<span class="t c " style="left:336.0px;width:300px;top:892px;font-size:14px;color:#757575;line-height:18px;height:18px;margin-top:-1px">Net profit</span>
<span class="t c " style="left:336.0px;width:300px;top:915.5px;font-size:16px;font-weight:bold;color:#111;line-height:18px;height:18px;margin-top:-1px">616 110.31</span>
<div class="a lt" style="left:640px;top:887px;width:293px;height:55px;border-radius:3px"></div>
<div class="a " style="left:645px;top:910px;width:283px;height:1px;background:#cfd5d8"></div>
<span class="t c " style="left:636.5px;width:300px;top:892px;font-size:14px;color:#757575;line-height:18px;height:18px;margin-top:-1px">Starting capital</span>
<span class="t c " style="left:636.5px;width:300px;top:915.5px;font-size:16px;font-weight:bold;color:#111;line-height:18px;height:18px;margin-top:-1px">10 000.00</span>
<div class="a lt" style="left:938px;top:887px;width:293px;height:55px;border-radius:3px"></div>
<div class="a " style="left:943px;top:910px;width:283px;height:1px;background:#cfd5d8"></div>
<span class="t c " style="left:934.5px;width:300px;top:892px;font-size:14px;color:#757575;line-height:18px;height:18px;margin-top:-1px">Ending Balance</span>
<span class="t c " style="left:934.5px;width:300px;top:915.5px;font-size:16px;font-weight:bold;color:#111;line-height:18px;height:18px;margin-top:-1px">626 110.31</span>
<div class="a lt" style="left:1236px;top:887px;width:293px;height:55px;border-radius:3px"></div>
<div class="a " style="left:1241px;top:910px;width:283px;height:1px;background:#cfd5d8"></div>
<span class="t c " style="left:1232.5px;width:300px;top:892px;font-size:14px;color:#757575;line-height:18px;height:18px;margin-top:-1px">Ending Equity</span>
<span class="t c " style="left:1232.5px;width:300px;top:915.5px;font-size:16px;font-weight:bold;color:#111;line-height:18px;height:18px;margin-top:-1px">626 110.31</span>
<div class="a pan" style="left:1504px;top:1px;width:30px;height:263px;border-radius:5px"></div>
<div class="a w" style="left:1509px;top:12px;width:19px;height:19px;border-radius:4px"></div>
<svg class="a" style="left:1504px;top:1px" width="30" height="263" viewBox="1504 1 30 263" fill="none" stroke="#2e2e2e" stroke-width="1">
<g fill="#80868a" stroke="none"><rect x="1510" y="6" width="1" height="1"/><rect x="1512" y="6" width="1" height="1"/><rect x="1514" y="6" width="1" height="1"/><rect x="1516" y="6" width="1" height="1"/><rect x="1518" y="6" width="1" height="1"/><rect x="1520" y="6" width="1" height="1"/><rect x="1522" y="6" width="1" height="1"/><rect x="1524" y="6" width="1" height="1"/><rect x="1526" y="6" width="1" height="1"/><rect x="1528" y="6" width="1" height="1"/><rect x="1510" y="8" width="1" height="1"/><rect x="1512" y="8" width="1" height="1"/><rect x="1514" y="8" width="1" height="1"/><rect x="1516" y="8" width="1" height="1"/><rect x="1518" y="8" width="1" height="1"/><rect x="1520" y="8" width="1" height="1"/><rect x="1522" y="8" width="1" height="1"/><rect x="1524" y="8" width="1" height="1"/><rect x="1526" y="8" width="1" height="1"/><rect x="1528" y="8" width="1" height="1"/></g>
<path d="M1516.1 16.6V25.6L1518.2 23.7L1520.1 27.4L1521.7 26.6L1519.9 23L1522.6 22.8Z" fill="#111" stroke="none"/>
<path d="M1513 46.5H1517M1520 46.5H1524M1518.5 41V45M1518.5 48V52M1518 46.5H1519" />
<path d="M1512 72.5H1516.3M1519 72.5H1523M1517.5 67.3V71.2M1517.5 74V78" />
<path d="M1514.2 70.5H1516.5M1521.2 70.5H1525M1519.5 65.2V69M1519.5 74.4V76.1M1519 70.5H1520M1517 72.5H1518" />
<path d="M1518.5 91V94.6M1513 96.5H1516.8" /><rect x="1518.5" y="96.5" width="5" height="5"/>
<path d="M1507 109.5H1530M1507 234.5H1531" stroke="#b3bcc1"/>
<path d="M1524.6 116.1L1511 129.8" /><path d="M1510 128.2V131.2H1513Z" fill="#111" stroke="none"/>
<path d="M1513 141.2C1516.5 142 1516.5 144.5 1514.5 146.5C1512.5 148.5 1511.8 149.5 1512.6 151.2" stroke="#444"/>
<path d="M1514.2 154.4L1514.8 151.4L1522 144.1L1524.8 146.8L1517.4 153.8Z M1520.4 145.7L1523.1 148.4" stroke="#444"/>
<path d="M1512.3 174.4L1520.6 166.4M1517.4 179.4L1525.3 171.5" stroke="#444"/>
<path d="M1515.4 172.5V177M1517.4 170.5V176.5M1519.4 168.8V175.5M1521.6 167.5V173.5" stroke="#555"/>
<path d="M1525.2 174.2H1523V179H1525.4M1523 176.5H1524.8" stroke="#444"/>
<path d="M1512.3 203.2L1522.6 193.4M1515 196.5L1520.6 191.4M1519 200.6L1524.6 195.5M1515 196.5L1519 200.6" stroke="#444"/>
<g fill="#222" stroke="none"><rect x="1512" y="216" width="1" height="1"/><rect x="1515" y="216" width="1" height="1"/><rect x="1518" y="216" width="1" height="1"/><rect x="1521" y="216" width="1" height="1"/><rect x="1524" y="216" width="1" height="1"/><rect x="1512" y="220" width="1" height="1"/><rect x="1515" y="220" width="1" height="1"/><rect x="1518" y="220" width="1" height="1"/><rect x="1521" y="220" width="1" height="1"/><rect x="1524" y="220" width="1" height="1"/><rect x="1512" y="224" width="1" height="1"/><rect x="1515" y="224" width="1" height="1"/><rect x="1518" y="224" width="1" height="1"/><rect x="1512" y="228" width="1" height="1"/><rect x="1515" y="228" width="1" height="1"/><rect x="1518" y="228" width="1" height="1"/></g>
<path d="M1525 224.5H1522.5V229.3M1522.5 226.6H1524.6" stroke="#222"/>
<path d="M1510 228.2V231.2H1513Z" fill="#111" stroke="none"/>
<g fill="#111" stroke="none"><circle cx="1514.4" cy="249.5" r="1.5"/><circle cx="1519.4" cy="249.5" r="1.5"/><circle cx="1524.5" cy="249.5" r="1.5"/></g>
</svg>
</body></html>
